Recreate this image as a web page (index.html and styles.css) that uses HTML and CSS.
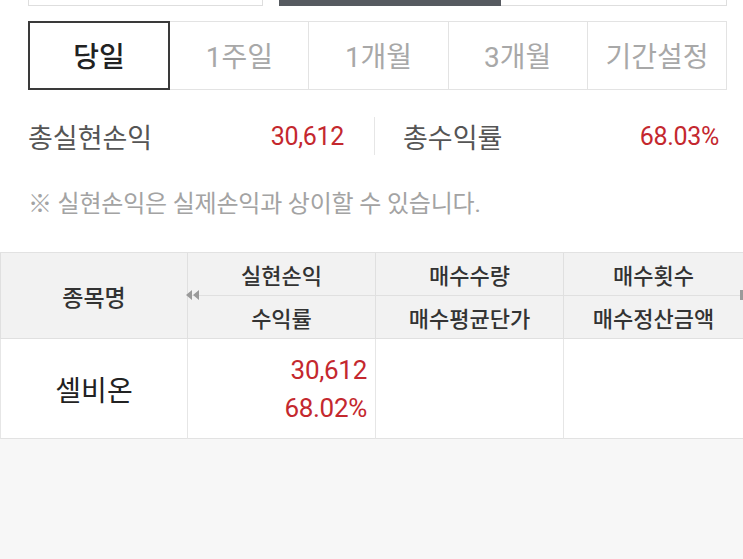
FILE: index.html
```html
<!DOCTYPE html>
<html lang="ko">
<head>
    <meta charset="UTF-8">
    <meta name="viewport" content="width=device-width, initial-scale=1.0">
    <title>실현손익</title>
    <link rel="stylesheet" href="styles.css">
</head>
<body>
    <div class="top">
        <div class="segment">
            <div class="seg-left"></div>
            <div class="seg-right">
                <div class="seg-on"></div>
                <div class="seg-off"></div>
            </div>
        </div>

        <div class="period">
            <button class="period-btn active">당일</button>
            <button class="period-btn">1주일</button>
            <button class="period-btn">1개월</button>
            <button class="period-btn">3개월</button>
            <button class="period-btn">기간설정</button>
        </div>

        <div class="summary">
            <div class="sum-item">
                <span class="sum-label">총실현손익</span>
                <span class="sum-value">30,612</span>
            </div>
            <div class="sum-divider"></div>
            <div class="sum-item">
                <span class="sum-label">총수익률</span>
                <span class="sum-value">68.03%</span>
            </div>
        </div>

        <p class="notice">※ 실현손익은 실제손익과 상이할 수 있습니다.</p>
    </div>

    <div class="grid">
        <div class="head name-head">종목명</div>
        <div class="head">실현손익</div>
        <div class="head">매수수량</div>
        <div class="head">매수횟수</div>
        <div class="head">수익률</div>
        <div class="head">매수평균단가</div>
        <div class="head">매수정산금액</div>

        <div class="cell name">셀비온</div>
        <div class="cell num">
            <span>30,612</span>
            <span>68.02%</span>
        </div>
        <div class="cell"></div>
        <div class="cell"></div>

        <span class="arrow arrow-left">
            <svg width="14" height="10" viewBox="0 0 14 10"><path d="M0 5 L6 0 L6 10 Z M7 5 L13 0 L13 10 Z" fill="#9a9a9a"/></svg>
        </span>
        <span class="arrow arrow-right"></span>
    </div>
</body>
</html>
```

FILE: styles.css
```css
body {
    margin: 0;
    padding: 0;
    background-color: #f7f7f7;
    font-family: Roboto, "Noto Sans CJK KR", sans-serif;
    color: #333;
}
.top {
    background-color: #fff;
    padding: 0 16px 0 28px;
}
.segment {
    display: flex;
    gap: 16px;
    height: 6px;
}
.seg-left {
    width: 233px;
    border: 1px solid #dedede;
    border-top: none;
}
.seg-right {
    flex: 1;
    display: flex;
}
.seg-on {
    width: 222px;
    background-color: #565a60;
}
.seg-off {
    flex: 1;
    border: 1px solid #dedede;
    border-top: none;
    border-left: none;
}
.period {
    display: flex;
    margin-top: 15px;
    height: 69px;
}
.period-btn {
    flex: 1;
    background: #fff;
    border: 1px solid #e3e3e3;
    border-left: none;
    font-family: Roboto, "Noto Sans CJK KR", sans-serif;
    font-size: 28px;
    color: #a8a8a8;
    padding: 0 0 2px;
}
.period-btn.active {
    border: 2px solid #3a3a3a;
    color: #222;
    font-weight: 500;
}
.summary {
    display: flex;
    align-items: center;
    margin-top: 24px;
    height: 44px;
}
.sum-item {
    flex: 1;
    display: flex;
    justify-content: space-between;
    align-items: center;
}
.sum-item:first-child {
    padding-right: 30px;
}
.sum-item:last-child {
    padding-left: 28px;
    padding-right: 8px;
}
.sum-label {
    font-size: 27px;
    color: #555;
}
.sum-value {
    font-size: 25px;
    color: #c4282e;
    letter-spacing: -0.3px;
}
.sum-divider {
    width: 1px;
    height: 38px;
    background-color: #e6e6e6;
}
.notice {
    margin: 0;
    padding: 26px 0 33px;
    font-size: 24px;
    color: #a3a3a3;
    letter-spacing: -0.2px;
}
.grid {
    position: relative;
    display: grid;
    grid-template-columns: 187px 188px 188px 180px;
    grid-template-rows: 43px 43px 100px;
    background-color: #fff;
    border-top: 1px solid #e2e2e2;
}
.head {
    background-color: #f2f2f2;
    display: flex;
    align-items: center;
    justify-content: center;
    font-size: 22px;
    font-weight: 500;
    color: #333;
    border-left: 1px solid #e0e0e0;
    border-bottom: 1px solid #e0e0e0;
}
.name-head {
    grid-row: span 2;
    font-size: 23px;
}
.cell {
    border-left: 1px solid #e6e6e6;
    border-bottom: 1px solid #e2e2e2;
}
.name {
    display: flex;
    align-items: center;
    justify-content: center;
    font-size: 28px;
    color: #222;
}
.num {
    display: flex;
    flex-direction: column;
    justify-content: center;
    align-items: flex-end;
    gap: 8px;
    padding-right: 8px;
    font-size: 26px;
    color: #c4282e;
    letter-spacing: -0.3px;
}
.arrow {
    position: absolute;
    line-height: 0;
}
.arrow-left {
    left: 186px;
    top: 37px;
}
.arrow-right {
    right: 0;
    top: 37px;
    width: 3px;
    height: 10px;
    background-color: #9a9a9a;
}
```
